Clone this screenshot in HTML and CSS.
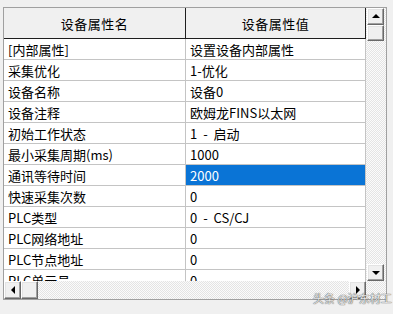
FILE: index.html
```html
<!DOCTYPE html>
<html lang="zh-CN">
<head>
  <meta charset="UTF-8"/>
  <meta name="viewport" content="width=device-width,initial-scale=1"/>
  <title>设备属性</title>
  <link rel="stylesheet" href="styles.css">
</head>
<body>

  <div class="grid-frame">
    <div class="view">
      <div class="head">
        <div class="hcell name">设备属性名</div>
        <div class="hcell val">设备属性值</div>
      </div>
      <div class="row"><div class="cell name">[内部属性]</div><div class="cell val">设置设备内部属性</div></div>
      <div class="row"><div class="cell name">采集优化</div><div class="cell val">1-优化</div></div>
      <div class="row"><div class="cell name">设备名称</div><div class="cell val">设备0</div></div>
      <div class="row"><div class="cell name">设备注释</div><div class="cell val">欧姆龙FINS以太网</div></div>
      <div class="row"><div class="cell name">初始工作状态</div><div class="cell val">1 - 启动</div></div>
      <div class="row"><div class="cell name">最小采集周期(ms)</div><div class="cell val">1000</div></div>
      <div class="row"><div class="cell name">通讯等待时间</div><div class="cell val selected">2000</div></div>
      <div class="row"><div class="cell name">快速采集次数</div><div class="cell val">0</div></div>
      <div class="row"><div class="cell name">PLC类型</div><div class="cell val">0 - CS/CJ</div></div>
      <div class="row"><div class="cell name">PLC网络地址</div><div class="cell val">0</div></div>
      <div class="row"><div class="cell name">PLC节点地址</div><div class="cell val">0</div></div>
      <div class="row"><div class="cell name">PLC单元号</div><div class="cell val">0</div></div>
    </div>

    <div class="vscroll">
      <div class="sbtn"><span class="arrow up"></span></div>
      <div class="thumb"></div>
      <div class="track"></div>
      <div class="sbtn"><span class="arrow down"></span></div>
    </div>

    <div class="hscroll">
      <div class="sbtn"><span class="arrow left"></span></div>
      <div class="thumb"></div>
      <div class="track"></div>
      <div class="sbtn"><span class="arrow right"></span></div>
    </div>

    <div class="corner"></div>
  </div>

  <div class="watermark">头条 @沪东材工</div>

</body>
</html>
```

FILE: styles.css
```css
body {
  margin: 0;
  background: #f0f0f0;
  color: #000;
  font-family: "Noto Sans CJK SC", "Noto Sans", sans-serif;
  font-size: 13px;
  position: relative;
  height: 314px;
  overflow: hidden;
}

.grid-frame {
  display: grid;
  grid-template-columns: 362px 20px;
  grid-template-rows: 273px 18px;
  width: max-content;
  margin: 7px 0 0 3px;
  border: 1px solid #a0a0a0;
  background: #fff;
}

.view {
  overflow: hidden;
}

/* header */

.head {
  display: flex;
  height: 31px;
  background: #f0f0f0;
  border-bottom: 1px solid #1e1e1e;
  box-sizing: border-box;
}

.hcell {
  display: flex;
  align-items: center;
  justify-content: center;
  border-right: 1px solid #1e1e1e;
  box-sizing: border-box;
  letter-spacing: 0.5px;
}

/* rows */

.row {
  display: flex;
  height: 21px;
  border-bottom: 1px solid #c4c4c4;
  box-sizing: border-box;
}

.cell {
  display: flex;
  align-items: center;
  padding-left: 4px;
  border-right: 1px solid #c4c4c4;
  box-sizing: border-box;
  white-space: pre;
  word-spacing: 3px;
  line-height: 1;
}

.name {
  width: 182px;
}

.val {
  width: 180px;
}

.hcell.name,
.hcell.val {
  padding: 0;
}

.cell.selected {
  background: #0a74d6;
  color: #fff;
}

/* scrollbars */

.vscroll {
  display: flex;
  flex-direction: column;
  padding: 0 2px 0 1px;
  background: repeating-conic-gradient(#e4e4e4 0 25%, #fbfbfb 0 50%) 0 0 / 2px 2px;
}

.hscroll {
  display: flex;
  background: repeating-conic-gradient(#e4e4e4 0 25%, #fbfbfb 0 50%) 0 0 / 2px 2px;
}

.corner {
  background: repeating-conic-gradient(#e4e4e4 0 25%, #fbfbfb 0 50%) 0 0 / 2px 2px;
}

.sbtn,
.thumb {
  flex: none;
  display: flex;
  align-items: center;
  justify-content: center;
  background: #f0f0f0;
  border: 1px solid;
  border-color: #fff #696969 #696969 #fff;
  box-shadow: inset -1px -1px 0 #a0a0a0, inset 1px 1px 0 #e3e3e3;
  box-sizing: border-box;
}

.vscroll .sbtn { height: 17px; }
.vscroll .thumb { height: 16px; }
.hscroll .sbtn { width: 17px; }
.hscroll .thumb { width: 17px; }

.track {
  flex: 1;
}

.arrow {
  width: 0;
  height: 0;
  border: 4px solid transparent;
}

.arrow.up {
  border-bottom: 4px solid #000;
  border-top-width: 0;
  margin-top: -1px;
}

.arrow.down {
  border-top: 4px solid #000;
  border-bottom-width: 0;
}

.arrow.left {
  border-right: 4px solid #000;
  border-left-width: 0;
}

.arrow.right {
  border-left: 4px solid #000;
  border-right-width: 0;
}

.watermark {
  position: absolute;
  left: 313px;
  top: 290px;
  font-size: 11px;
  color: #e8e8e8;
  text-shadow: 0 0 1px #555, 0 0 1px #555;
  white-space: nowrap;
}
```
